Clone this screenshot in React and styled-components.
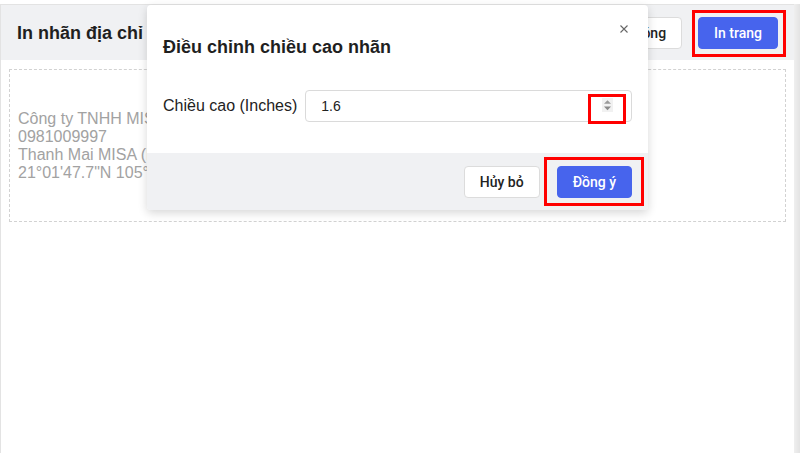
import React from 'react';
import styled, { createGlobalStyle } from 'styled-components';

const GlobalStyle = createGlobalStyle`
  html, body { margin: 0; padding: 0; background: #fff; }
  body { font-family: "Liberation Sans", Arial, sans-serif; color: #222; }
  * { box-sizing: border-box; }
`;

const Screen = styled.div`
  display: flex;
  width: 800px;
  height: 453px;
  padding-top: 4px;
  overflow: hidden;
`;

const Page = styled.div`
  position: relative;
  flex: 1;
  display: flex;
  flex-direction: column;
  border-top: 1px solid #e3e3e3;
  border-left: 1px solid #e3e3e3;
`;

const Scrollbar = styled.div`
  width: 6px;
  background: linear-gradient(to right, #efefef, #e3e3e3);
`;

const Toolbar = styled.div`
  height: 55px;
  padding: 0 16px;
  display: flex;
  align-items: center;
  justify-content: space-between;
  background: #f0f1f3;
`;

const Title = styled.h1`
  margin: 0;
  font-size: 18px;
  line-height: 20px;
  font-weight: bold;
  color: #1f1f1f;
`;

const Actions = styled.div`
  display: flex;
  align-items: center;
  gap: ${p => p.$gap || 16}px;
`;

const Button = styled.button`
  height: 32px;
  padding: 0 15px;
  border-radius: 4px;
  font-family: Roboto, "Liberation Sans", Arial, sans-serif;
  font-size: 14px;
  font-weight: 500;
  cursor: pointer;
  border: 1px solid ${p => (p.$primary ? '#4764ed' : '#dcdcdc')};
  background: ${p => (p.$primary ? '#4764ed' : '#fff')};
  color: ${p => (p.$primary ? '#fff' : '#222')};
`;

const Marked = styled.span`
  position: relative;
  display: inline-flex;
  &::after {
    content: '';
    position: absolute;
    top: ${p => p.$inset[0]}px;
    right: ${p => p.$inset[1]}px;
    bottom: ${p => p.$inset[2]}px;
    left: ${p => p.$inset[3]}px;
    border: 3px solid #ff0000;
    pointer-events: none;
  }
`;

const Content = styled.div`
  padding: 9px 8px;
`;

const LabelPreview = styled.div`
  height: 153px;
  border: 1px dashed #d2d2d2;
  padding-left: 8px;
  display: flex;
  flex-direction: column;
  justify-content: center;
  font-size: 16px;
  line-height: 18px;
  color: #a2a2a2;
`;

const Modal = styled.div`
  position: absolute;
  top: 0;
  left: 146px;
  width: 501px;
  background: #fff;
  border-radius: 4px;
  box-shadow: 0 3px 10px rgba(0, 0, 0, 0.16);
`;

const ModalHeader = styled.div`
  padding: 32px 16px 0;
`;

const Close = styled.button`
  position: absolute;
  top: 20px;
  right: 20px;
  width: 8px;
  height: 8px;
  padding: 0;
  border: none;
  background: none;
  display: flex;
`;

const ModalBody = styled.div`
  padding: 33px 16px 31px;
  display: flex;
  align-items: center;
  gap: 8px;
`;

const FieldLabel = styled.label`
  font-size: 16px;
  color: #222;
`;

const Field = styled.div`
  flex: 1;
  height: 32px;
  border: 1px solid #dadada;
  border-radius: 4px;
  padding: 0 18px 0 15px;
  display: flex;
  align-items: center;
  justify-content: space-between;
  font-size: 14px;
  color: #222;
`;

const Spinner = styled.span`
  display: flex;
  margin-top: -2px;
`;

const ModalFooter = styled.div`
  padding: 13px 16px 12px;
  display: flex;
  justify-content: flex-end;
  background: #f0f1f3;
  border-radius: 0 0 4px 4px;
`;

export default function App() {
  return (
    <>
      <GlobalStyle />
      <Screen>
        <Page>
          <Toolbar>
            <Title>In nhãn địa chỉ</Title>
            <Actions>
              <Button>Đóng</Button>
              <Marked $inset={[-7, -8, -8, -6]}>
                <Button $primary>In trang</Button>
              </Marked>
            </Actions>
          </Toolbar>
          <Content>
            <LabelPreview>
              <div>Công ty TNHH MISA</div>
              <div>0981009997</div>
              <div>Thanh Mai MISA (Hà Nội)</div>
              <div>21°01'47.7"N 105°47'35.6"E</div>
            </LabelPreview>
          </Content>

          <Modal>
            <ModalHeader>
              <Title>Điều chỉnh chiều cao nhãn</Title>
            </ModalHeader>
            <Close aria-label="Đóng">
              <svg width="8" height="8" viewBox="0 0 8 8">
                <path d="M0.5 0.5 L7.5 7.5 M7.5 0.5 L0.5 7.5" stroke="#666" strokeWidth="1.1" />
              </svg>
            </Close>
            <ModalBody>
              <FieldLabel>Chiều cao (Inches)</FieldLabel>
              <Field>
                <span>1.6</span>
                <Marked $inset={[-6, -13, -12, -14]}>
                  <Spinner>
                    <svg width="11" height="14" viewBox="0 0 11 14">
                      <rect width="11" height="14" fill="#f1f1f1" />
                      <path d="M2 5.8 L5.5 2.2 L9 5.8 Z" fill="#9a9a9a" />
                      <path d="M2 8.6 L5.5 12.2 L9 8.6 Z" fill="#8a8a8a" />
                    </svg>
                  </Spinner>
                </Marked>
              </Field>
            </ModalBody>
            <ModalFooter>
              <Actions $gap={17}>
                <Button>Hủy bỏ</Button>
                <Marked $inset={[-9, -12, -8, -13]}>
                  <Button $primary>Đồng ý</Button>
                </Marked>
              </Actions>
            </ModalFooter>
          </Modal>
        </Page>
        <Scrollbar />
      </Screen>
    </>
  );
}
